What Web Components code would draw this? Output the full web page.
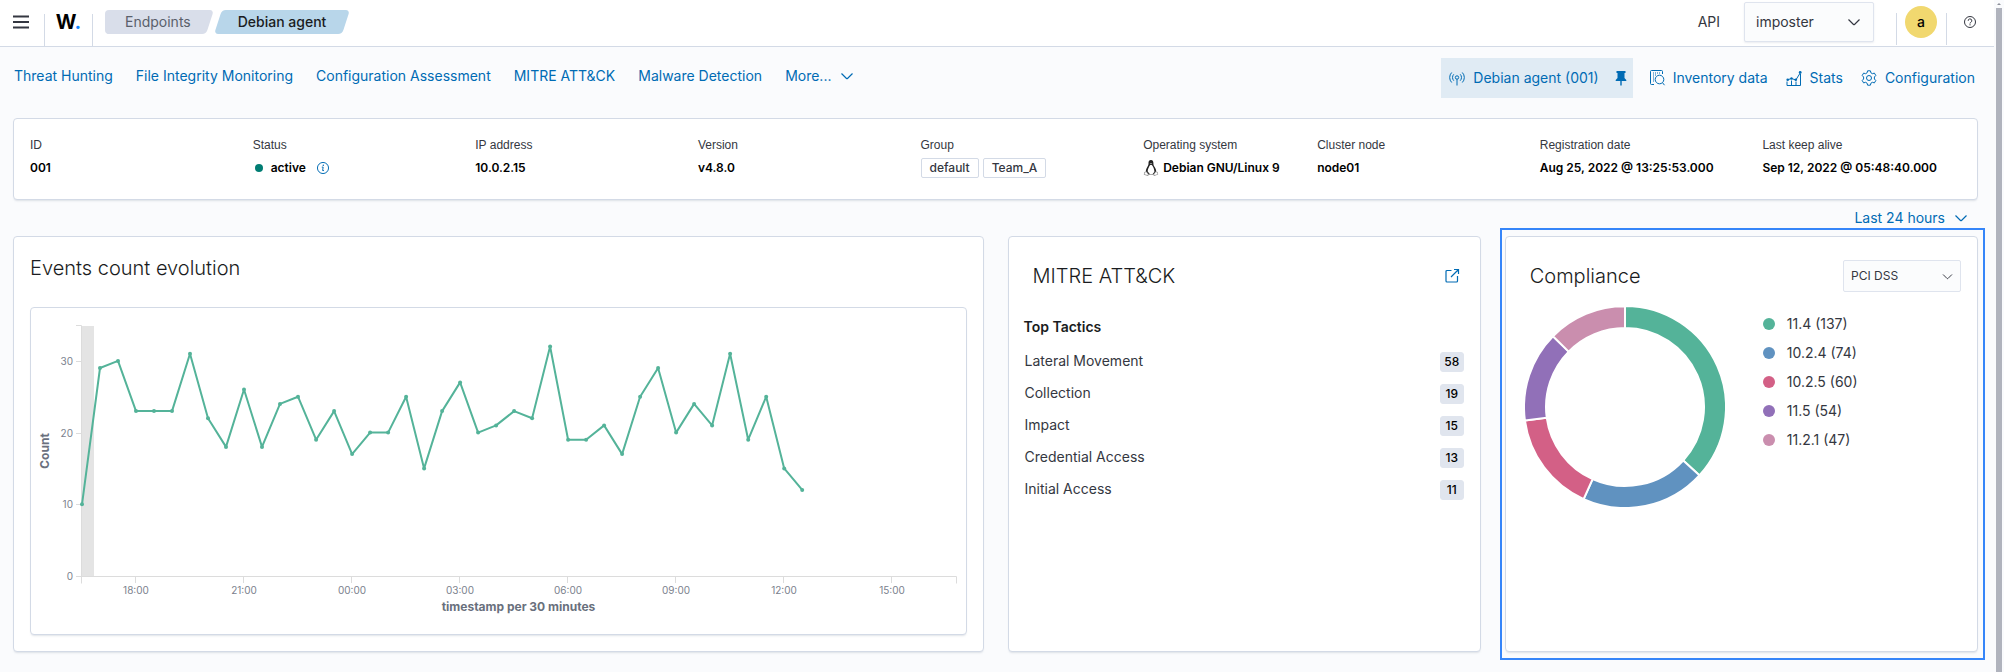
<!DOCTYPE html>
<html lang="en">
<head>
<meta charset="utf-8">
<title>Debian agent - Endpoints</title>
<style>
  body {
    margin: 0;
    font-family: Inter, "Liberation Sans", sans-serif;
    font-size: 14px;
    line-height: 20px;
    color: #343741;
    background: #fafbfd;
    --primary: #006bb4;
    --border: #d3dae6;
    --ink: #1a1c21;
  }
</style>
</head>
<body>
<agent-app></agent-app>

<script>
const define = (name, html, setup) => {
  const template = document.createElement('template');
  template.innerHTML = html;
  customElements.define(name, class extends HTMLElement {
    constructor() {
      super();
      this.attachShadow({ mode: 'open' }).append(template.content.cloneNode(true));
    }
    connectedCallback() { if (setup) setup(this, this.shadowRoot); }
  });
};

/* ---------- icons ---------- */
const ICONS = {
  menu: '<path d="M0 2.5h16M0 8h16M0 13.5h16" stroke-width="2"/>',
  chevron: '<path d="M2.5 5.5l5 5q.5.4 1 0l5-5" stroke-width="1.2"/>',
  help: '<circle cx="8" cy="8" r="5.5"/><path d="M6.2 6.800a1.800 1.800 0 1 1 2.600 1.500q-.8.4-.8 1.200"/><path d="M8 10.200v1.200"/>',
  info: '<circle cx="8" cy="8" r="7.400" stroke-width="1.300"/><path d="M6.400 6.800h1.800l-.7 4.600h1.800" stroke-width="1.300"/><circle cx="8.400" cy="4.300" r="1" fill="currentColor" stroke="none"/>',
  agent: '<circle cx="8" cy="7.500" r="1.700"/><path d="M8 9.200V15.500M4.800 4.300a4.600 4.600 0 0 0 0 6.400M11.200 4.300a4.600 4.600 0 0 1 0 6.400M2.700 2.500a7.200 7.200 0 0 0 0 10M13.300 2.500a7.200 7.200 0 0 1 0 10"/>',
  pin: '<path fill="currentColor" stroke="none" d="M3.500 1h9v2h-1v5l1.800 2v1H8.700v4.600H7.300V11H2.700v-1l1.800-2V3h-1z"/>',
  inventory: '<path d="M5 14.500H2.500a1 1 0 0 1-1-1v-12a1 1 0 0 1 1-1h10a1 1 0 0 1 1 1V4"/><path stroke-dasharray="1 1" d="M4 3h8M4 5h4M4 7h2M4 9h2M4 11h2"/><circle cx="10.500" cy="9.500" r="4.300"/><path d="M13.500 12.700l2 2.500"/>',
  stats: '<path d="M1 11.500v4h13.500V4M5.500 15.500v-5M10 15.500v-4"/><path d="M1.500 9.800L5.500 8.500l4.300 1.500L14.200 3"/><g fill="currentColor" stroke="none"><circle cx="1.700" cy="9.800" r="1.300"/><circle cx="5.500" cy="8.500" r="1.200"/><circle cx="9.800" cy="9.800" r="1.300"/><circle cx="14.200" cy="2.400" r="1.400"/></g>',
  gear: '<circle cx="8" cy="8" r="2.500"/><path d="M6.600.8h2.800l.5 2 1.500.9 2-.6 1.400 2.400-1.400 1.500v2l1.400 1.500-1.400 2.400-2-.6-1.500.9-.5 2H6.600l-.5-2-1.500-.9-2 .6-1.400-2.400L2.600 9V7L1.200 5.500l1.400-2.400 2 .6 1.500-.9z"/>',
  popout: '<path stroke-width="1.200" d="M7.500 2.500H3a1 1 0 0 0-1 1V13a1 1 0 0 0 1 1h9.500a1 1 0 0 0 1-1V8M7 9l7.500-7.500M10 1.500h4.500V6"/>',
  tux: '<g stroke="none"><path fill="#222" d="M8 0C6 0 5.400 1.500 5.500 3.200c.1 1.500-.3 2.200-1.200 3.700C3.300 8.600 2.700 10 2.800 12l1 2.500h8.400l1-2.500c.2-2-.7-3.900-1.700-5.300C10.600 5.400 10.400 4.800 10.400 3.200 10.400 1.300 9.900 0 8 0z"/><path fill="#fff" d="M8 5c-1 0-1.500.5-1.900 1.700C5.300 8.300 4.600 9.600 4.700 11.500L7 14.300h2.500l1.900-2.600c0-2-.7-3.600-1.400-5C9.500 5.500 9 5 8 5z"/><path fill="#999" d="M6.600 3h2.800L8 4.400zM1.200 12l2.300-.5 2.700 3.200-1.400 1.200L.8 14.800zM14.800 12l-2.200-.5-2.700 3.200 1.300 1.200 4-1.300z"/><path fill="#fff" d="M1.800 12.600l1.500-.3 1.700 2.300-.6.500-2.700-.8zM14.200 12.600l-1.500-.3-1.600 2.300.6.500 2.700-.9z"/></g>'
};
customElements.define('ui-icon', class extends HTMLElement {
  connectedCallback() {
    if (this.shadowRoot) return;
    this.attachShadow({ mode: 'open' }).innerHTML = `
      <style>
        :host { display: inline-flex; flex: none; width: 16px; height: 16px; }
        svg { width: 100%; height: 100%; fill: none; stroke: currentColor; stroke-width: 1; overflow: visible; }
      </style>
      <svg viewBox="0 0 16 16" aria-hidden="true">${ICONS[this.getAttribute('name')]}</svg>`;
  }
});

/* ---------- small building blocks ---------- */
define('ui-link', `
  <style>
    :host { display: inline-flex; }
    a { display: flex; align-items: center; gap: 8px; color: var(--primary); text-decoration: none; white-space: nowrap; }
  </style>
  <a href="#"><slot></slot></a>`);

define('ui-menu-button', `
  <style>
    :host { display: inline-flex; }
    button { display: flex; align-items: center; gap: 8px; border: 0; padding: 0; background: none; color: var(--primary); font: inherit; white-space: nowrap; }
  </style>
  <button type="button"><slot></slot><ui-icon name="chevron"></ui-icon></button>`);

define('ui-select', `
  <style>
    :host { display: grid; align-items: center; width: 130px; height: 40px; }
    select { grid-area: 1 / 1; width: 100%; height: 100%; box-sizing: border-box; appearance: none; margin: 0; padding: 0 32px 0 11px; border: 1px solid #dfe4ee; border-radius: 2px; background: #fbfcfd; color: inherit; font: inherit; box-shadow: 0 1px 2px rgba(152, 162, 179, .2); }
    ui-icon { grid-area: 1 / 1; justify-self: end; margin-right: 12px; pointer-events: none; }
    :host([compact]) { width: 118px; height: 32px; font-size: 12px; }
    :host([compact]) select { padding-left: 7px; box-shadow: none; }
    :host([compact]) ui-icon { width: 13px; height: 13px; margin-right: 7px; }
  </style>
  <select><option></option></select><ui-icon name="chevron"></ui-icon>`,
  (host, root) => {
    root.querySelector('option').textContent = host.getAttribute('value');
    root.querySelector('select').setAttribute('aria-label', host.getAttribute('label'));
  });

define('ui-card', `
  <style>
    :host { display: block; box-sizing: border-box; background: #fff; border: 1px solid var(--border); border-radius: 4px; box-shadow: 0 2px 2px -1px rgba(152, 162, 179, .3); }
  </style>
  <slot></slot>`);

define('ui-title', `
  <style>
    :host { display: block; }
    h2 { margin: 0; font-size: 20px; line-height: 30px; font-weight: 300; color: var(--ink); white-space: nowrap; }
  </style>
  <h2><slot></slot></h2>`);

define('ui-tag', `
  <style>
    :host { display: inline-block; box-sizing: border-box; height: 20px; padding: 0 8px; border: 1px solid var(--border); border-radius: 2px; font-size: 12px; line-height: 18px; font-weight: 500; color: #343741; }
    :host([filled]) { width: 24px; padding: 0; border-color: #e0e5ee; border-radius: 3px; background: #e0e5ee; text-align: center; color: #000; }
  </style>
  <slot></slot>`);

define('ui-crumb', `
  <style>
    :host { display: block; }
    a { display: block; position: relative; z-index: 0; height: 24px; padding: 0 23px 0 24px; line-height: 24px; font-weight: 500; text-decoration: none; color: var(--ink); --shape: #b8d6ea; }
    a::before, a::after { content: ""; position: absolute; z-index: -1; top: 0; bottom: 0; left: 4px; right: 4px; border-radius: 4px; background: var(--shape); transform: skewX(-18deg); }
    a::after { display: none; }
    :host([first]) a { padding-left: 20px; font-weight: 400; color: #5a606b; --shape: #d9deea; }
    :host([first]) a::after { display: block; left: 0; right: 50%; transform: none; }
  </style>
  <a href="#"><slot></slot></a>`);

/* ---------- page header ---------- */
define('app-header', `
  <style>
    :host { display: flex; align-items: stretch; height: 46px; background: #fff; border-bottom: 1px solid var(--border); }
    .menu { display: flex; align-items: center; border: 0; padding: 0 15px 0 13px; height: 44px; background: none; color: #343741; }
    .rule { align-self: flex-end; width: 1px; height: 32px; background: var(--border); }
    .logo { width: 47px; text-align: center; font-size: 20px; line-height: 44px; font-weight: 700; color: #000; text-decoration: none; }
    .logo span { color: #1285ff; }
    nav { display: flex; padding: 10px 12px; }
    .right { display: flex; align-items: center; height: 44px; margin-left: auto; }
    .right ui-select { margin: 0 22px 0 24px; }
    .rule.side { align-self: auto; margin-top: 14px; flex: none; }
    .avatar { width: 32px; height: 32px; margin: 0 9px 0 8px; padding: 0; border: 0; border-radius: 50%; background: #f1d86f; color: #000; font: inherit; font-weight: 500; }
    .help { display: flex; border: 0; margin: 0 16px 0 15px; padding: 0; background: none; color: #343741; }
  </style>
  <button class="menu" type="button" aria-label="Menu"><ui-icon name="menu"></ui-icon></button>
  <span class="rule"></span>
  <a class="logo" href="#">W<span>.</span></a>
  <span class="rule"></span>
  <nav><ui-crumb first>Endpoints</ui-crumb><ui-crumb>Debian agent</ui-crumb></nav>
  <div class="right">
    <span>API</span>
    <ui-select value="imposter" label="API"></ui-select>
    <span class="rule side"></span>
    <button class="avatar" type="button">a</button>
    <span class="rule side"></span>
    <button class="help" type="button" aria-label="Help"><ui-icon name="help"></ui-icon></button>
  </div>`);

define('agent-nav', `
  <style>
    :host { display: flex; justify-content: space-between; align-items: flex-start; padding: 11px 19px 20px 14px; height: 40px; }
    .modules { display: flex; gap: 23px; height: 36px; align-items: center; }
    .tools { display: flex; gap: 18px; height: 40px; align-items: center; }
    .current { display: flex; align-items: center; gap: 14px; height: 40px; padding: 0 4px 0 8px; margin-right: -2px; background: #e0ebf4; color: var(--primary); }
  </style>
  <div class="modules">
    <ui-link>Threat Hunting</ui-link><ui-link>File Integrity Monitoring</ui-link>
    <ui-link>Configuration Assessment</ui-link><ui-link>MITRE ATT&amp;CK</ui-link>
    <ui-link>Malware Detection</ui-link><ui-menu-button>More...</ui-menu-button>
  </div>
  <div class="tools">
    <div class="current"><ui-link><ui-icon name="agent"></ui-icon>Debian agent (001)</ui-link><ui-icon name="pin"></ui-icon></div>
    <ui-link><ui-icon name="inventory"></ui-icon>Inventory data</ui-link>
    <ui-link><ui-icon name="stats"></ui-icon>Stats</ui-link>
    <ui-link><ui-icon name="gear"></ui-icon>Configuration</ui-link>
  </div>`);

/* ---------- agent facts ---------- */
define('agent-fact', `
  <style>
    :host { display: block; min-width: 0; font-size: 12px; white-space: nowrap; }
    dl, dd { margin: 0; }
    dt { font-family: "Liberation Sans", sans-serif; line-height: 18px; }
    dd { display: flex; align-items: center; gap: 4px; height: 20px; margin-top: 4px; font-weight: 600; color: #000; }
  </style>
  <dl><dt></dt><dd><slot></slot></dd></dl>`,
  (host, root) => { root.querySelector('dt').textContent = host.getAttribute('label'); });

define('agent-facts', `
  <style>
    :host { display: block; }
    .grid { display: grid; grid-template-columns: repeat(5, minmax(0, 1fr)) 150px repeat(3, minmax(0, 1fr)); gap: 24px; padding: 17px 16px 21px; }
    .dot { width: 8px; height: 8px; margin: 0 4px 0 2px; border-radius: 50%; background: #017d73; }
    .info { width: 12px; height: 12px; margin-left: 7px; color: var(--primary); }
  </style>
  <ui-card><div class="grid">
    <agent-fact label="ID">001</agent-fact>
    <agent-fact label="Status"><span class="dot"></span>active<ui-icon class="info" name="info"></ui-icon></agent-fact>
    <agent-fact label="IP address">10.0.2.15</agent-fact>
    <agent-fact label="Version">v4.8.0</agent-fact>
    <agent-fact label="Group"><ui-tag>default</ui-tag><ui-tag>Team_A</ui-tag></agent-fact>
    <agent-fact label="Operating system"><ui-icon name="tux"></ui-icon>Debian GNU/Linux 9</agent-fact>
    <agent-fact label="Cluster node">node01</agent-fact>
    <agent-fact label="Registration date">Aug 25, 2022 @ 13:25:53.000</agent-fact>
    <agent-fact label="Last keep alive">Sep 12, 2022 @ 05:48:40.000</agent-fact>
  </div></ui-card>`);

/* ---------- events chart ---------- */
const COUNTS = [10,29,30,23,23,23,31,22,18,26,18,24,25,19,23,17,20,20,25,15,23,27,20,21,23,22,32,19,19,21,17,25,29,20,24,21,31,19,25,15,12];
const drawEvents = (svg, width) => {
  const left = 50, right = width - 10, top = 17, bottom = 268, slots = 48.6;
  const x = i => left + 1 + (right - left) * i / slots;
  const y = v => bottom - (bottom - top) * v / 35;
  const points = COUNTS.map((v, i) => [x(i).toFixed(1), y(v).toFixed(1)]);
  const yTicks = [0, 10, 20, 30].map(v =>
    `<path class="axis" d="M${left - 5} ${Math.round(y(v)) + .5}h5"/><text x="${left - 8}" y="${Math.round(y(v)) + 4}" text-anchor="end">${v}</text>`).join('');
  const xTicks = ['18:00','21:00','00:00','03:00','06:00','09:00','12:00','15:00'].map((t, i) => {
    const tx = Math.round(x(3 + 6 * i));
    return `<path class="axis" d="M${tx - .5} ${bottom}v7"/><text x="${tx}" y="${bottom + 18}" text-anchor="middle">${t}</text>`;
  }).join('');
  svg.innerHTML = `
    <rect x="${left + 1}" y="${top + 1}" width="12" height="${bottom - top}" fill="#e4e4e4"/>
    <path class="axis" d="M${left - 5} ${top + .5}h5.500v${bottom - top + 7}M${left} ${bottom + .5}H${right + .5}v7"/>
    ${yTicks}${xTicks}
    <polyline points="${points.join(' ')}"/>
    ${points.map(p => `<circle cx="${p[0]}" cy="${p[1]}" r="2"/>`).join('')}
    <text class="name" transform="translate(18 143) rotate(-90)" text-anchor="middle">Count</text>
    <text class="name" x="${(left + right) / 2}" y="303" text-anchor="middle">timestamp per 30 minutes</text>`;
};
define('events-chart', `
  <style>
    :host { display: block; }
    svg { display: block; width: 100%; height: 326px; font-size: 10px; }
    text { fill: #7b818d; }
    .name { font-size: 12px; font-weight: 700; fill: #69707d; }
    .axis { fill: none; stroke: #dcdcdc; }
    polyline { fill: none; stroke: #54b399; stroke-width: 2; stroke-linejoin: round; }
    circle { fill: #54b399; }
  </style>
  <svg role="img" aria-label="Events count evolution"></svg>`,
  (host, root) => {
    const svg = root.querySelector('svg');
    const draw = () => drawEvents(svg, Math.round(svg.getBoundingClientRect().width));
    draw();
    new ResizeObserver(draw).observe(host);
  });

define('events-panel', `
  <style>
    :host { display: block; }
    .body { padding: 16px; }
    .plot { margin-top: 24px; }
  </style>
  <ui-card><div class="body">
    <ui-title>Events count evolution</ui-title>
    <ui-card class="plot"><events-chart></events-chart></ui-card>
  </div></ui-card>`);

/* ---------- MITRE panel ---------- */
define('mitre-panel', `
  <style>
    :host { display: grid; }
    header { display: flex; justify-content: space-between; align-items: center; padding: 24px 20px 0 24px; }
    header a { display: flex; color: var(--primary); }
    h3 { margin: 26px 15px 8px; font-size: 14px; line-height: 20px; font-weight: 600; color: var(--ink); }
    table { width: 100%; border-collapse: collapse; }
    td { height: 32px; padding: 0 16px; }
    td:last-child { text-align: right; }
    ui-tag { vertical-align: middle; }
  </style>
  <ui-card>
    <header><ui-title>MITRE ATT&amp;CK</ui-title><a href="#" aria-label="Open MITRE ATT&amp;CK"><ui-icon name="popout"></ui-icon></a></header>
    <h3>Top Tactics</h3>
    <table>
      <tr><td>Lateral Movement</td><td><ui-tag filled>58</ui-tag></td></tr>
      <tr><td>Collection</td><td><ui-tag filled>19</ui-tag></td></tr>
      <tr><td>Impact</td><td><ui-tag filled>15</ui-tag></td></tr>
      <tr><td>Credential Access</td><td><ui-tag filled>13</ui-tag></td></tr>
      <tr><td>Initial Access</td><td><ui-tag filled>11</ui-tag></td></tr>
    </table>
  </ui-card>`);

/* ---------- compliance panel ---------- */
const RULES = [['11.4', 137, '#54b399'], ['10.2.4', 74, '#6092c0'], ['10.2.5', 60, '#d36086'], ['11.5', 54, '#9170b8'], ['11.2.1', 47, '#ca8eae']];
define('compliance-panel', `
  <style>
    :host { display: grid; position: relative; }
    header { display: flex; justify-content: space-between; align-items: center; padding: 23px 16px 0 24px; }
    .body { display: flex; align-items: flex-start; gap: 38px; padding: 15px 16px 0 19px; }
    svg { flex: none; width: 200px; height: 200px; }
    svg path { stroke: #fff; stroke-width: 2; }
    ul { margin: 2px 0 0; padding: 0; list-style: none; }
    li { display: flex; align-items: center; gap: 12px; height: 29px; white-space: nowrap; }
    i { width: 12px; height: 12px; border-radius: 50%; }
    .focus { position: absolute; inset: -8px -7px -8px -5px; border: 2px solid #3585f9; pointer-events: none; }
  </style>
  <ui-card>
    <header><ui-title>Compliance</ui-title><ui-select compact value="PCI DSS" label="Compliance standard"></ui-select></header>
    <div class="body"><svg viewBox="-100 -100 200 200" role="img" aria-label="Compliance"></svg><ul></ul></div>
  </ui-card>
  <div class="focus"></div>`,
  (host, root) => {
    const total = RULES.reduce((sum, r) => sum + r[1], 0);
    const at = (f, r) => `${(r * Math.sin(f * 2 * Math.PI)).toFixed(2)} ${(-r * Math.cos(f * 2 * Math.PI)).toFixed(2)}`;
    let from = 0, arcs = '';
    for (const [, count, color] of RULES) {
      const to = from + count / total;
      arcs += `<path fill="${color}" d="M${at(from, 101)}A101 101 0 0 1 ${at(to, 101)}L${at(to, 79)}A79 79 0 0 0 ${at(from, 79)}z"/>`;
      from = to;
    }
    root.querySelector('svg').innerHTML = arcs;
    root.querySelector('ul').innerHTML = RULES.map(([name, count, color]) =>
      `<li><i style="background:${color}"></i><span>${name} (${count})</span></li>`).join('');
  });

/* ---------- page ---------- */
define('scroll-rail', `
  <style>
    :host { display: flex; flex-direction: column; align-items: center; gap: 3px; width: 10px; padding-top: 3px; box-sizing: border-box; }
    .up { border: 2px solid transparent; border-top: 0; border-bottom-color: #8c8f99; }
    .thumb { flex: 1; width: 6px; background: #b0b3bd; }
  </style>
  <span class="up"></span><span class="thumb"></span>`);

define('agent-app', `
  <style>
    :host { display: flex; min-height: 100vh; }
    .page { flex: 1; min-width: 0; }
    agent-facts { margin: 0 16px 0 13px; }
    .time { display: flex; justify-content: flex-end; padding: 8px 25px 8px 13px; }
    main { display: grid; grid-template-columns: repeat(4, minmax(0, 1fr)); gap: 24px; padding: 0 16px 19px 13px; }
    events-panel { grid-column: span 2; }
  </style>
  <div class="page">
    <app-header></app-header>
    <agent-nav></agent-nav>
    <agent-facts></agent-facts>
    <div class="time"><ui-menu-button>Last 24 hours</ui-menu-button></div>
    <main><events-panel></events-panel><mitre-panel></mitre-panel><compliance-panel></compliance-panel></main>
  </div>
  <scroll-rail></scroll-rail>`);
</script>
</body>
</html>
